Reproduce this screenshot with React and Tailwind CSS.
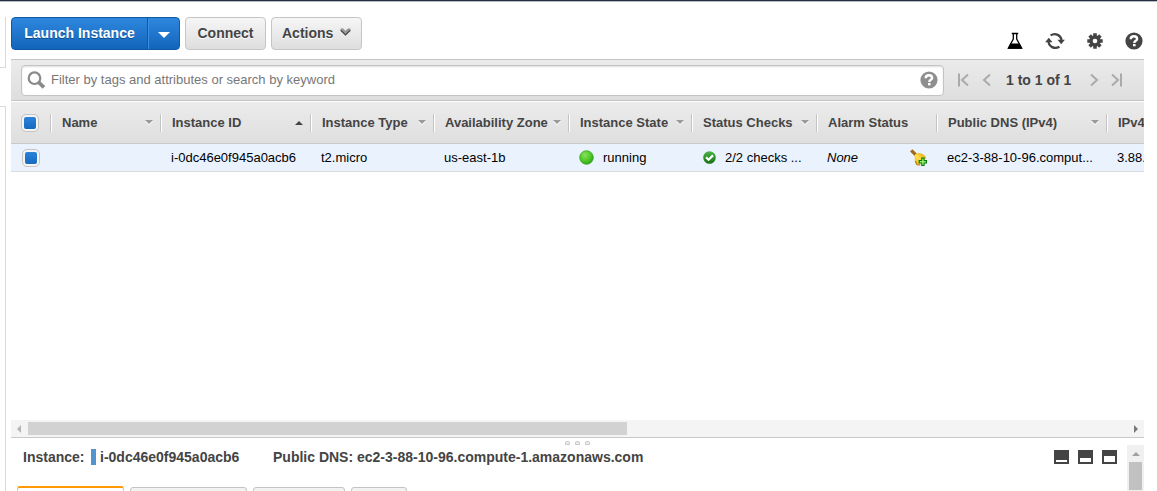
import React from "react";

const columns = [
  { label: "Name", width: "w-[110px]", arrow: "down" },
  { label: "Instance ID", width: "w-[150px]", arrow: "up" },
  { label: "Instance Type", width: "w-[123px]", arrow: "down" },
  { label: "Availability Zone", width: "w-[135px]", arrow: "down" },
  { label: "Instance State", width: "w-[123px]", arrow: "down" },
  { label: "Status Checks", width: "w-[125px]", arrow: "down" },
  { label: "Alarm Status", width: "w-[120px]" },
  { label: "Public DNS (IPv4)", width: "w-[170px]", arrow: "down" },
  { label: "IPv4 Public IP", width: "w-[140px]" },
];

const tabs = [
  { label: "Description", width: "w-[107px]" },
  { label: "Status Checks", width: "w-[117px]" },
  { label: "Monitoring", width: "w-[92px]" },
  { label: "Tags", width: "w-[56px]" },
];

function Checkbox({ label }) {
  return (
    <input
      type="checkbox"
      defaultChecked
      aria-label={label}
      className="block size-[18px] appearance-none rounded-[5px] border border-[#c4c4c4] bg-[#f4f4f4] p-px checked:bg-linear-to-b checked:from-[#2e87de] checked:to-[#1166bb] checked:bg-clip-content checked:shadow-[inset_0_0_0_2px_#f4f4f4]"
    />
  );
}

function SortArrow({ dir }) {
  return dir === "up" ? (
    <svg width="8" height="4" viewBox="0 0 8 4" className="shrink-0" aria-hidden="true">
      <path d="M0 4 4 0 8 4Z" fill="#444" />
    </svg>
  ) : (
    <svg width="8" height="5" viewBox="0 0 8 5" className="shrink-0" aria-hidden="true">
      <path d="M0 1 4 5 8 1Z" fill="#fff" />
      <path d="M0 0H8L4 4Z" fill="#999" />
    </svg>
  );
}

function HelpIcon({ color }) {
  return (
    <svg width="18" height="18" viewBox="0 0 18 18" aria-hidden="true">
      <circle cx="9" cy="9" r="8.6" fill={color} />
      <path d="M5.7 7.2C5.7 5.2 7.1 4.200 9 4.200s3.100 1 3.100 2.700c0 1.900-2.800 2-2.800 4" fill="none" stroke="#fff" strokeWidth="2.4" />
      <rect x="8" y="12" width="2.6" height="2.3" fill="#fff" />
    </svg>
  );
}

function FlaskIcon() {
  return (
    <svg width="16" height="18" viewBox="0 0 16 18" aria-hidden="true">
      <path d="M4.8 1.5h6.4M6.3 1.5V7L1.4 16h13.2L9.7 7V1.5" fill="none" stroke="#000" strokeWidth="1.3" />
      <path d="M3.4 11.600h9.2l2.7 5.200H.7Z" fill="#000" />
    </svg>
  );
}

function RefreshIcon() {
  return (
    <svg width="20" height="18" viewBox="0 0 20 18" aria-hidden="true">
      <path d="M5.600 3.400A6.900 6.900 0 0 1 16.500 9M14.400 14.600A6.900 6.900 0 0 1 3.500 9" fill="none" stroke="#444" strokeWidth="2.3" />
      <path d="M12.500 7.800h7.400l-3.700 4.400ZM.1 10.200h7.400L3.800 5.800Z" fill="#444" />
    </svg>
  );
}

function GearIcon() {
  return (
    <svg width="16" height="16" viewBox="0 0 16 16" aria-hidden="true">
      <g stroke="#444" strokeWidth="3.6">
        <path d="M8 .3v15.4M.3 8h15.4M2.6 2.6l10.8 10.8M13.4 2.6 2.6 13.4" />
      </g>
      <circle cx="8" cy="8" r="5.7" fill="#444" />
      <circle cx="8" cy="8" r="2.300" fill="#fff" />
    </svg>
  );
}

function PagerIcon({ d }) {
  return (
    <svg width="12" height="14" viewBox="0 0 12 14" className="block" aria-hidden="true">
      <path d={d} fill="none" stroke="#aaa" strokeWidth="2" />
    </svg>
  );
}

function BellIcon() {
  return (
    <svg width="18" height="17" viewBox="0 0 18 17" aria-hidden="true">
      <defs>
        <linearGradient id="bell" x1="0" y1="1" x2="1" y2="0">
          <stop offset="0" stopColor="#f0b010" />
          <stop offset=".45" stopColor="#ffe04a" />
          <stop offset="1" stopColor="#d9980c" />
        </linearGradient>
      </defs>
      <path d="M1.200 1.300 6 6" stroke="#a0691a" strokeWidth="3.200" />
      <path d="M4.600 6.500C6 4 8.500 3.500 11 4.500c2.500 1 4.600 2 5.200 4.500L9 15.800C6.500 16 5 14.500 4.900 12.500Z" fill="url(#bell)" />
      <path d="m5.300 12 1.700 3.600 3.200.2" fill="none" stroke="#c07c0c" strokeWidth="1.200" />
      <path d="M11.200 8.500h3.400v2.600H17v3.400h-2.400V17h-3.400v-2.500H8.600v-3.400h2.600Z" fill="#0a7a10" />
      <path d="M12.900 9.800v6M9.800 12.800h6" stroke="#8cf06a" strokeWidth="1.500" />
    </svg>
  );
}

function CheckIcon() {
  return (
    <svg width="13" height="13" viewBox="0 0 13 13" className="shrink-0" aria-hidden="true">
      <defs>
        <linearGradient id="ok" x1="0" y1="0" x2="0" y2="1">
          <stop offset="0" stopColor="#4cb648" />
          <stop offset="1" stopColor="#14700f" />
        </linearGradient>
      </defs>
      <circle cx="6.5" cy="6.5" r="6.3" fill="url(#ok)" />
      <path d="m3 6.3 2.6 2.5 4.400-4.400" fill="none" stroke="#fff" strokeWidth="2.200" />
    </svg>
  );
}

function RunningIcon() {
  return (
    <svg width="15" height="15" viewBox="0 0 15 15" className="shrink-0" aria-hidden="true">
      <defs>
        <radialGradient id="run" cx=".38" cy=".32" r=".75">
          <stop offset="0" stopColor="#86e35c" />
          <stop offset=".6" stopColor="#4cc626" />
          <stop offset="1" stopColor="#2b9c12" />
        </radialGradient>
      </defs>
      <circle cx="7.5" cy="7.5" r="6.8" fill="url(#run)" stroke="#36a51c" strokeWidth=".8" />
    </svg>
  );
}

function PaneIcon({ y }) {
  return (
    <svg width="15" height="14" viewBox="0 0 15 14" className="block" aria-hidden="true">
      <rect width="15" height="14" fill="#444" />
      <rect x="2" y={y} width="11" height={12 - y} fill="#fff" />
    </svg>
  );
}

const plainButton =
  "flex h-[33px] items-center rounded-[4px] border border-[#c5c5c5] bg-linear-to-b from-[#f6f6f6] to-[#dedede] px-[10px] pb-[2px] text-sm font-bold text-[#444] [text-shadow:0_1px_0_#fff]";

export default function App() {
  return (
    <div className="flex h-screen flex-col overflow-hidden bg-white font-['Liberation_Sans',Arial,sans-serif] text-[13px] text-black">
      <div className="h-[2px] shrink-0 border-b border-[#b9bfca] bg-[#232f3e]" />
      <div className="flex min-h-0 flex-1">
        <aside className="flex w-[6px] shrink-0 flex-col gap-[38px] pt-[15px]">
          <div className="h-[51px] border-r border-b border-[#d9d9d9]" />
          <div className="flex-1 border-t border-r border-[#d9d9d9]" />
        </aside>

        <main className="flex min-w-0 flex-1 flex-col pr-[13px] pl-[5px]">
          <div className="flex h-[57px] shrink-0 items-start pt-[15px]">
            <div className="flex h-[33px] overflow-hidden rounded-[4px] border border-[#1259a3] bg-linear-to-b from-[#2e87de] to-[#1166bb]">
              <button className="w-[136px] border-r border-[#1259a3] px-[10px] pb-[2px] text-sm font-bold whitespace-nowrap text-white [text-shadow:0_1px_0_#0d4c8c]">
                Launch Instance
              </button>
              <button aria-label="Launch options" className="flex w-[31px] items-center justify-center border-l border-[#3d8fe0]">
                <svg width="12" height="6" viewBox="0 0 12 6" className="mt-[2px]" aria-hidden="true">
                  <path d="M0 0H12L6 6Z" fill="#fff" />
                </svg>
              </button>
            </div>
            <button className={plainButton + " ml-[5px] w-[81px] justify-center"}>Connect</button>
            <button className={plainButton + " ml-[5px] w-[91px] justify-between"}>
              Actions
              <svg width="11" height="8" viewBox="0 0 11 8" className="mb-[2px]" aria-hidden="true">
                <path d="M.8 1.200h2.400l2.300 2.300 2.300-2.300h2.400v1L5.500 6.800.8 2.200Z" fill="#999" />
                <path d="M.7 2.200 5.500 6.900l4.800-4.700" fill="none" stroke="#444" strokeWidth="1.200" />
                <path d="M.6 1h2.600l2.300 2.300L7.800 1h2.600" fill="none" stroke="#777" strokeWidth=".8" />
              </svg>
            </button>
            <div className="mt-[15px] ml-auto flex items-center gap-[22px] pr-px">
              <button aria-label="Experiments"><FlaskIcon /></button>
              <button aria-label="Refresh"><RefreshIcon /></button>
              <button aria-label="Settings"><GearIcon /></button>
              <button aria-label="Help"><HelpIcon color="#444" /></button>
            </div>
          </div>

          <div className="flex h-[42px] shrink-0 items-center border-t border-b border-t-[#c4c4c4] border-b-[#c4c4c4] bg-linear-to-b from-[#ebebeb] to-[#dedede] pl-[10px]">
            <label className="flex h-[31px] min-w-0 flex-1 items-center gap-[5px] rounded-[4px] border border-[#c4c4c4] bg-white px-[5px] shadow-[inset_0_1px_2px_#ddd]">
              <svg width="19" height="18" viewBox="0 0 19 18" className="shrink-0" aria-hidden="true">
                <circle cx="7.5" cy="7.2" r="5.8" fill="none" stroke="#8a8a8a" strokeWidth="2.2" />
                <path d="m11.7 11.4 5.3 5" stroke="#8a8a8a" strokeWidth="3.6" />
              </svg>
              <input
                type="text"
                aria-label="Filter instances"
                placeholder="Filter by tags and attributes or search by keyword"
                className="min-w-0 flex-1 bg-transparent outline-none placeholder:text-[#777]"
              />
              <HelpIcon color="#8f8f8f" />
            </label>
            <nav aria-label="Pages" className="ml-[13px] flex w-[187px] items-center">
              <button aria-label="First page"><PagerIcon d="M2 .5v13M11 1.5 5 7l6 5.500" /></button>
              <button aria-label="Previous page" className="ml-[13px]"><PagerIcon d="M8 1.500 2 7l6 5.500" /></button>
              <span className="ml-[12px] w-[69px] text-sm font-bold whitespace-nowrap text-[#444]">1 to 1 of 1</span>
              <button aria-label="Next page" className="ml-[13px]"><PagerIcon d="M3 1.500 9 7l-6 5.500" /></button>
              <button aria-label="Last page" className="ml-[11px]"><PagerIcon d="M1 1.500 7 7l-6 5.500M10 .5v13" /></button>
            </nav>
          </div>

          <div className="min-h-0 flex-1 overflow-hidden">
            <table className="w-[1235px] table-fixed border-separate border-spacing-0">
              <thead>
                <tr className="h-[43px] bg-linear-to-b from-[#ececec] to-[#dedede] text-left text-[#444]">
                  <th className="w-[39px] border-t border-b border-t-white border-b-[#c9c9c9] p-0 pl-[10px]"><Checkbox label="Select all instances" /></th>
                  {columns.map((c) => (
                    <th key={c.label} className={c.width + " border-t border-b border-t-white border-b-[#c9c9c9] p-0 font-bold"}>
                      <div className="flex h-[18px] items-center justify-between border-l border-[#c4c4c4] pr-[7px] pl-[11px] whitespace-nowrap shadow-[inset_1px_0_0_#fff]">
                        {c.label}
                        {c.arrow && <SortArrow dir={c.arrow} />}
                      </div>
                    </th>
                  ))}
                </tr>
              </thead>
              <tbody>
                <tr className="h-[28px] bg-[#eaf2fe] whitespace-nowrap *:border-b *:border-[#d8dbe0]">
                  <td className="p-0 pl-[11px]"><Checkbox label="Select instance" /></td>
                  <td />
                  <td className="p-0 pl-[11px]">i-0dc46e0f945a0acb6</td>
                  <td className="p-0 pl-[11px]">t2.micro</td>
                  <td className="p-0 pl-[11px]">us-east-1b</td>
                  <td className="p-0 pl-[11px]">
                    <span className="flex items-center gap-[9px]"><RunningIcon />running</span>
                  </td>
                  <td className="p-0 pl-[12px]">
                    <span className="flex items-center gap-[9px]"><CheckIcon />2/2 checks ...</span>
                  </td>
                  <td className="p-0 pr-[8px] pl-[11px]">
                    <span className="flex items-center justify-between"><i>None</i><BellIcon /></span>
                  </td>
                  <td className="p-0 pl-[11px]">ec2-3-88-10-96.comput...</td>
                  <td className="p-0 pl-[11px]">3.88.10.96</td>
                </tr>
              </tbody>
            </table>
          </div>

          <div className="flex h-[18px] shrink-0 items-center border-b border-[#c9c9c9] bg-[#f4f4f4] px-[6px]">
            <svg width="4" height="8" viewBox="0 0 4 8" aria-hidden="true"><path d="M4 0v8L0 4Z" fill="#b5b5b5" /></svg>
            <div className="mx-[7px] flex-1"><div className="h-[13px] w-[54.5%] bg-[#d2d2d2]" /></div>
            <svg width="4" height="8" viewBox="0 0 4 8" aria-hidden="true"><path d="M0 0v8L4 4Z" fill="#777" /></svg>
          </div>

          <section className="flex h-[53px] shrink-0 flex-col">
            <div className="flex h-[7px] shrink-0 items-end justify-center gap-[5px]">
              {[0, 1, 2].map((n) => (
                <span key={n} className="h-[4px] w-[5px] rounded-t-[2px] border border-[#c9c9c9] bg-[#eee]" />
              ))}
            </div>
            <div className="flex flex-1">
              <div className="flex min-w-0 flex-1 flex-col">
                <div className="flex h-[24px] shrink-0 items-center pr-[10px] pl-[12px] text-sm font-bold whitespace-nowrap text-[#444]">
                  <span className="w-[68px]">Instance:</span>
                  <span className="h-[16px] w-[5px] bg-[#5294cf]" />
                  <span className="w-[177px] pl-[4px]">i-0dc46e0f945a0acb6</span>
                  <span>Public DNS: ec2-3-88-10-96.compute-1.amazonaws.com</span>
                  <div className="ml-auto flex gap-[9px]">
                    <button aria-label="Minimize details"><PaneIcon y={10} /></button>
                    <button aria-label="Split details"><PaneIcon y={8} /></button>
                    <button aria-label="Maximize details"><PaneIcon y={6} /></button>
                  </div>
                </div>
                <div role="tablist" className="mt-[17px] flex h-[5px] items-start gap-[6px] overflow-hidden pl-[6px]">
                  {tabs.map((t, n) => (
                    <button
                      key={t.label}
                      role="tab"
                      aria-label={t.label}
                      aria-selected={n === 0}
                      className={
                        t.width +
                        (n === 0
                          ? " h-[30px] rounded-t-[3px] border border-t-2 border-[#c9c9c9] border-t-[#ff9900] bg-white"
                          : " mt-px h-[30px] rounded-t-[3px] border border-[#c4c4c4] bg-[#f2f2f2]")
                      }
                    />
                  ))}
                </div>
              </div>
              <div className="flex w-[17px] shrink-0 flex-col items-center bg-[#f0f0f0] pt-[7px]">
                <svg width="8" height="4" viewBox="0 0 8 4" aria-hidden="true"><path d="M0 4 4 0 8 4Z" fill="#a0a0a0" /></svg>
                <div className="mt-[6px] mb-px w-[13px] flex-1 bg-[#c1c1c1]" />
              </div>
            </div>
          </section>
        </main>
      </div>
    </div>
  );
}
